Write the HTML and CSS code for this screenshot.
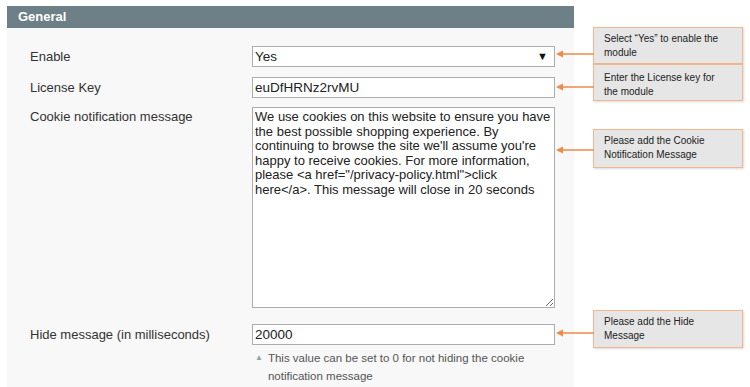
FILE: index.html
```html
<!DOCTYPE html>
<html lang="en">
<head>
    <meta charset="UTF-8">
    <meta name="viewport" content="width=device-width, initial-scale=1.0">
    <title>General settings</title>
    <link rel="stylesheet" href="styles.css">
</head>
<body>
    <div class="page">
        <div class="panel">
            <div class="panel-head">General</div>

            <div class="form-row row-enable">
                <label class="form-label">Enable</label>
                <div class="form-field select-wrap">
                    <select class="form-input">
                        <option>Yes</option>
                        <option>No</option>
                    </select>
                    <span class="select-arrow">▼</span>
                </div>
            </div>

            <div class="form-row row-key">
                <label class="form-label">License Key</label>
                <div class="form-field">
                    <input class="form-input" type="text" value="euDfHRNz2rvMU">
                </div>
            </div>

            <div class="form-row row-cookie">
                <label class="form-label">Cookie notification message</label>
                <div class="form-field">
                    <textarea class="form-input form-textarea">We use cookies on this website to ensure you have the best possible shopping experience. By continuing to browse the site we'll assume you're happy to receive cookies. For more information, please &lt;a href="/privacy-policy.html"&gt;click here&lt;/a&gt;. This message will close in 20 seconds</textarea>
                </div>
            </div>

            <div class="form-row row-hide">
                <label class="form-label">Hide message (in milliseconds)</label>
                <div class="form-field">
                    <input class="form-input" type="text" value="20000">
                    <div class="field-note">
                        <span class="note-mark">▲</span>
                        <span>This value can be set to 0 for not hiding the cookie notification message</span>
                    </div>
                </div>
            </div>
        </div>

        <!-- annotations -->
        <div class="callout callout-1">
            <svg class="callout-arrow" style="top: 22px" width="38" height="8" viewBox="0 0 38 8"><line x1="5" y1="4" x2="38" y2="4" /><polygon points="0,4 7,0.5 7,7.5" /></svg>
            Select “Yes” to enable the module
        </div>
        <div class="callout callout-2">
            <svg class="callout-arrow" style="top: 18px" width="38" height="8" viewBox="0 0 38 8"><line x1="5" y1="4" x2="38" y2="4" /><polygon points="0,4 7,0.5 7,7.5" /></svg>
            Enter the License key for the module
        </div>
        <div class="callout callout-3">
            <svg class="callout-arrow" style="top: 16px" width="38" height="8" viewBox="0 0 38 8"><line x1="5" y1="4" x2="38" y2="4" /><polygon points="0,4 7,0.5 7,7.5" /></svg>
            Please add the Cookie Notification Message
        </div>
        <div class="callout callout-4">
            <svg class="callout-arrow" style="top: 18px" width="38" height="8" viewBox="0 0 38 8"><line x1="5" y1="4" x2="38" y2="4" /><polygon points="0,4 7,0.5 7,7.5" /></svg>
            Please add the Hide Message
        </div>
    </div>
</body>
</html>
```

FILE: styles.css
```css
body {
    margin: 0;
    background: #ffffff;
    font-family: "Liberation Sans", Arial, sans-serif;
    color: #333;
}

.page {
    position: relative;
    width: 750px;
    height: 387px;
    overflow: hidden;
}

.panel {
    margin: 6px 0 0 7px;
    width: 567px;
    height: 381px;
    background: #f8f8f8;
}

.panel-head {
    height: 22px;
    line-height: 22px;
    padding-left: 11px;
    background: #6d7f87;
    color: #fff;
    font-size: 13px;
    font-weight: bold;
}

.form-row {
    display: grid;
    grid-template-columns: 222px 303px;
    padding-left: 23px;
}

.row-enable {
    margin-top: 18px;
}

.row-key {
    margin-top: 10px;
}

.row-cookie {
    margin-top: 9px;
}

.row-hide {
    margin-top: 16px;
}

.form-label {
    font-size: 13px;
    line-height: 21px;
    color: #333;
}

.row-cookie .form-label {
    line-height: 20px;
}

.form-field {
    position: relative;
}

.form-input {
    display: block;
    box-sizing: border-box;
    width: 303px;
    height: 21px;
    margin: 0;
    padding: 0 2px;
    border: 1px solid #adadad;
    border-radius: 0;
    background: #fff;
    font-family: "Liberation Sans", Arial, sans-serif;
    font-size: 13.5px;
    color: #222;
    outline: none;
}

select.form-input {
    appearance: none;
    -webkit-appearance: none;
    padding-left: 2px;
}

.select-arrow {
    position: absolute;
    right: 7px;
    top: 4px;
    font-size: 11px;
    color: #111;
    pointer-events: none;
}

.form-textarea {
    height: 201px;
    padding: 2px 2px;
    font-size: 13px;
    line-height: 14.5px;
    resize: vertical;
}

.field-note {
    display: flex;
    gap: 5px;
    margin-top: 4px;
    padding-left: 3px;
    font-size: 11.5px;
    line-height: 18px;
    color: #555;
}

.note-mark {
    font-size: 8px;
    color: #8fa1aa;
}

.callout {
    position: absolute;
    left: 593px;
    width: 150px;
    box-sizing: border-box;
    padding: 4px 20px 4px 10px;
    background: #e6e6e6;
    border: 1px solid #f2b88c;
    box-shadow: 1px 1px 2px rgba(0, 0, 0, 0.15);
    font-size: 10px;
    line-height: 14px;
    color: #222;
}

.callout-1 {
    top: 27px;
    height: 37px;
}

.callout-2 {
    top: 64px;
    height: 37px;
    padding-top: 6px;
}

.callout-3 {
    top: 129px;
    height: 39px;
}

.callout-4 {
    top: 310px;
    height: 38px;
}

.callout-arrow {
    position: absolute;
    left: -38px;
    overflow: visible;
}

.callout-arrow line {
    stroke: #ee8a46;
    stroke-width: 1.3;
}

.callout-arrow polygon {
    fill: #ee8a46;
}
```
